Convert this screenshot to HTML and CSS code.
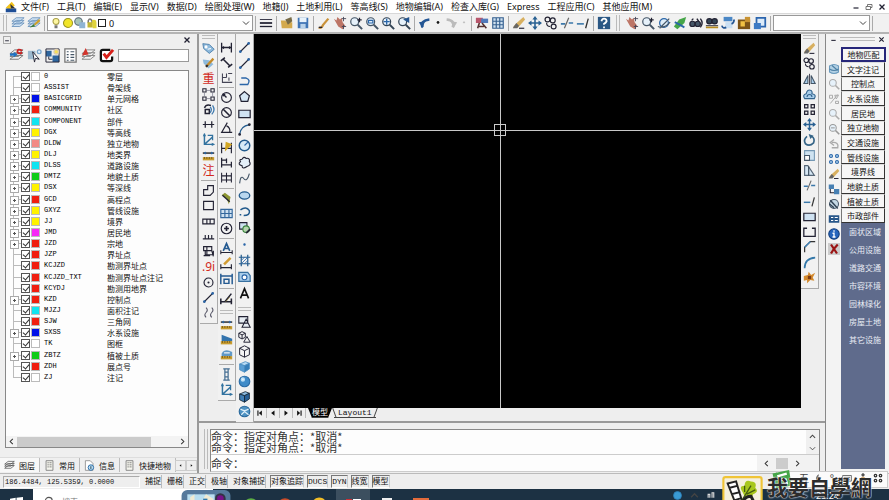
FILE: index.html
```html
<!DOCTYPE html>
<html lang="zh-CN">
<head>
<meta charset="utf-8">
<title>CAD</title>
<link rel="stylesheet" href="styles.css">
</head>
<body>
<nav class="menubar">
  <span class="logo" data-icon="app"></span>
  <a href="#">文件(F)</a><a href="#">工具(T)</a><a href="#">编辑(E)</a><a href="#">显示(V)</a><a href="#">数据(D)</a><a href="#">绘图处理(W)</a><a href="#">地籍(J)</a><a href="#">土地利用(L)</a><a href="#">等高线(S)</a><a href="#">地物编辑(A)</a><a href="#">检查入库(G)</a><a href="#">Express</a><a href="#">工程应用(C)</a><a href="#">其他应用(M)</a>
  <div class="winctl"><button aria-label="最小化" data-icon="min"></button><button aria-label="还原" data-icon="restore"></button><button aria-label="关闭" data-icon="close"></button></div>
</nav>

<header class="topbar">
  <i class="grip"></i>
  <div class="tools" data-icons="layers layersedit"></div>
  <i class="rule"></i>
  <div class="combo layercombo">
    <span data-icon="bulb"></span><span data-icon="sun"></span><span data-icon="freeze"></span><span data-icon="lock"></span><span class="box"></span>
    <select aria-label="图层"><option>0</option></select>
    <span class="chev" data-icon="chev"></span>
  </div>
  <i class="rule"></i>
  <div class="tools" data-icons="ltype | open save | pen pan zoomrt zoomwin zoomall zoomprev | undo dot redo dotg | match table | erase move copy trim extend | help"></div>
  <i class="grip"></i>
  <div class="tools" data-icons="pan zoomrt orbit greenarrow binoc bincar sheet case win"></div>
  <i class="rule"></i>
  <div class="combo stylecombo"><select aria-label="样式"><option></option></select><span class="chev" data-icon="chev"></span></div>
  <i class="rule"></i>
</header>

<main class="workspace">
  <aside class="palette">
    <div class="palhead"><button class="mini" aria-label="折叠" data-icon="min"></button><button class="mini plain" aria-label="关闭" data-icon="close"></button></div>
    <div class="paltools">
      <div class="tools" data-icons="layc pick tree list layred check"></div>
      <input type="text" aria-label="过滤">
    </div>
    <div class="treebox">
      <ul class="tree" id="tree"></ul>
      <div class="hscroll"><button aria-label="左" data-icon="left"></button><div class="track"><div class="thumb"></div></div><button aria-label="右" data-icon="right"></button></div>
    </div>
    <div class="paltabs">
      <button class="on"><span data-icon="stack"></span>图层</button><button><span data-icon="page"></span>常用</button><button><span data-icon="info"></span>信息</button><button><span data-icon="page"></span>快捷地物</button>
      <div class="tabnav"><button aria-label="上一个" data-icon="tl"></button><button aria-label="下一个" data-icon="tr"></button></div>
    </div>
  </aside>

  <section class="center">
    <div class="stage">
      <div class="vcol c1"><i class="vgrip"></i><div class="tools" data-icons="tag tagpen !重 nodes swirl break axis ruler !注 | poly rect2 rect3 comb build !.9i circ line waves"></div></div>
      <div class="vcol c2">
        <div class="tools" data-icons="dimh dimd dimo | diar diac ang | dimq dimb dimc | dimy tol cent | dima dimp dimu | dims"></div>
        <i class="vgrip"></i>
        <div class="tools" data-icons="ruler slope slope2 | ibar axis"></div>
      </div>
      <div class="vcol c3">
        <div class="tools" data-icons="line line arcl penta rect arc circle cloud spline ellipse earc block point hatch region text"></div>
        <i class="vgrip"></i>
        <div class="tools" data-icons="tria cubes wire cube sphere cubek globe"></div>
      </div>
      <div class="view">
        <div class="canvas"><i class="hx"></i><i class="vx"></i><i class="aim"></i></div>
        <div class="sheets">
          <button aria-label="首个" data-icon="first"></button><button aria-label="上一个" data-icon="tl"></button><button aria-label="下一个" data-icon="tr"></button><button aria-label="末个" data-icon="last"></button>
          <button class="sheet on">模型</button><button class="sheet">Layout1</button>
        </div>
      </div>
      <div class="vcol mod"><i class="vgrip"></i><div class="tools" data-icons="erase copy mirror offset array move rotate scale stretch trim extend rect rectb chamfer fillet explode"></div></div>
    </div>
    <div class="cmd">
      <i class="grip"></i>
      <div class="cmdbox">
        <div class="history"><div><p>命令：指定对角点：*取消*</p><p>命令：指定对角点：*取消*</p></div><div class="vs"><button aria-label="上" data-icon="up"></button><button aria-label="下" data-icon="chev"></button></div></div>
        <div class="prompt"><label for="cmd">命令：</label><input id="cmd" type="text"><div class="hs"><button aria-label="左" data-icon="left"></button><b></b><button aria-label="右" data-icon="right"></button></div></div>
      </div>
    </div>
  </section>

  <aside class="side">
    <div class="sidehead"><button aria-label="折叠" data-icon="min"></button><i></i><button aria-label="关闭" data-icon="close"></button></div>
    <div class="sidebody">
      <div class="tools" data-icons="db zoomg nodesg zoomg zoomg2 undog dots4 erase linkb nopen grid infob redx"></div>
      <div class="cats">
        <button class="on">地物匹配</button>
        <div class="group"><button>文字注记</button><button>控制点</button><button>水系设施</button><button>居民地</button><button>独立地物</button><button>交通设施</button><button>管线设施</button><button>境界线</button><button>地貌土质</button><button>植被土质</button><button>市政部件</button></div>
        <div class="sub"><a href="#">面状区域</a><a href="#">公用设施</a><a href="#">道路交通</a><a href="#">市容环境</a><a href="#">园林绿化</a><a href="#">房屋土地</a><a href="#">其它设施</a></div>
      </div>
    </div>
  </aside>
</main>

<footer class="status">
  <output>186.4484, 125.5359, 0.0000</output>
  <button>捕捉</button><button>栅格</button><button>正交</button><button>极轴</button><button>对象捕捉</button><button class="on">对象追踪</button><button class="on">DUCS</button><button class="on">DYN</button><button class="on">线宽</button><button class="on">模型</button>
</footer>

<div class="taskbar">
  <button class="start" aria-label="开始" data-icon="windows"></button>
  <label class="find"><span data-icon="mag"></span><input type="text" placeholder="搜索" aria-label="搜索"></label>
  <span class="widget" data-icon="widget"></span>
  <div class="apps"><button aria-label="浏览器" data-icon="appg"></button><button aria-label="录屏" data-icon="appr"></button><button aria-label="帮助" data-icon="appy"></button><button class="live" aria-label="CAD" data-icon="appc"></button><button aria-label="文档" data-icon="appd"></button><button aria-label="演示" data-icon="apps"></button></div>
  <div class="tray"><span data-icon="trayb"></span><span data-icon="up"></span><span data-icon="traya"></span><time>23:24</time></div>
</div>

<div class="ime"><span>五</span><span data-icon="moon"></span><span>°,</span><span data-icon="kbd"></span><span data-icon="person"></span><span data-icon="four"></span></div>
<span class="simes" data-icon="sime"></span>
<div class="brand"><span class="brandlogo" data-icon="brand"></span><strong>我要自學網</strong></div>
<script src="app.js"></script>
</body>
</html>
```
FILE: styles.css
```css
* { box-sizing: border-box; }
html, body { height: 100%; }
body {
  margin: 0; display: flex; flex-direction: column; overflow: hidden; position: relative;
  background: #eeeeee; color: #111;
  font: 8px/11px "Noto Sans", "Noto Sans CJK SC", sans-serif;
}
button, input, select { font: inherit; color: inherit; margin: 0; padding: 0; border: 0; background: none; outline: 0; min-width: 0; }
a { color: inherit; text-decoration: none; }
ul, p { margin: 0; padding: 0; list-style: none; }
svg { display: block; width: 100%; height: 100%; overflow: visible; }
i { display: block; flex: none; }
select { appearance: none; }

.menubar { flex: none; height: 13px; display: flex; align-items: center; gap: 8px; padding-left: 5px; background: #fff; font-size: 9px; white-space: nowrap; }
.logo { width: 12px; height: 12px; margin-right: -4px; }
.winctl { margin-left: auto; display: flex; gap: 5px; padding-right: 3px; }
.winctl button { width: 8px; height: 8px; }

.topbar { flex: none; height: 21px; display: flex; align-items: center; background: #f1f1f1; border-top: 1px solid #d8d8d8; border-bottom: 2px solid #b4b4b4; }
.topbar .tools { display: flex; align-items: center; flex: none; }
.topbar .tools button { width: 16px; height: 14px; padding: 0 1px; }
.topbar .tools button.slim { width: 10px; padding: 0; }
.rule { width: 1px; height: 15px; background: #aaa; margin: 0 2px; }
.grip { width: 4px; height: 16px; border: solid #bbb; border-width: 0 1px; margin: 0 3px; }
.topbar .tools + .grip { margin: 0 4px; }
.combo { display: flex; flex: none; align-items: center; height: 16px; border: 1px solid #999; background: #fff; }
.combo select { flex: 1; height: 14px; padding-left: 3px; }
.layercombo { width: 206px; padding-left: 2px; font-size: 9px; }
.layercombo > span { width: 12px; height: 12px; }
.layercombo .box { width: 8px; height: 8px; border: 1px solid #222; }
.combo .chev { width: 8px; height: 8px; margin-right: 2px; }
.stylecombo { width: 97px; }

.workspace { flex: 1; min-height: 0; display: flex; }
.palette { width: 199px; flex: none; display: flex; flex-direction: column; border-right: 2px solid #999; background: #efefef; }
.palhead { display: flex; justify-content: space-between; height: 12px; padding: 2px 6px 0 3px; }
.mini { width: 8px; height: 8px; border: 1px solid #aaa; }
.mini.plain { border: 0; }
.paltools { display: flex; align-items: center; height: 18px; padding: 0 8px 0 9px; }
.paltools .tools { display: flex; gap: 3px; margin-right: 4px; }
.paltools .tools button { width: 15px; height: 15px; }
.paltools input { flex: 1; height: 13px; border: 1px solid #999; background: #fff; }
.treebox { flex: 1; margin: 6px 8px 9px 5px; border: 1px solid #888; background: #fdfdfd; display: flex; flex-direction: column; justify-content: space-between; }
.tree { height: 312px; display: grid; grid-auto-rows: 1fr; position: relative; }
.tree li { display: grid; grid-template-columns: 15px 10px 13px 63px 1fr; align-items: center; position: relative; }
.tree li::before { content: ""; position: absolute; left: 7px; top: 0; bottom: 0; border-left: 1px solid #bbb; }
.tree li:first-child::before { top: 5px; }
.tree li:last-child::before { bottom: 5px; }
.twig { position: relative; height: 7px; }
.twig::before { content: ""; position: absolute; left: 7px; top: 3px; width: 8px; height: 1px; background: #bbb; }
.twig.plus::after { content: ""; position: absolute; left: 4px; top: 0; width: 7px; height: 7px; border: 1px solid #aaa; background: linear-gradient(#555, #555) center/3px 1px no-repeat, linear-gradient(#555, #555) center/1px 3px no-repeat, #fff; }
.tree input { appearance: none; width: 9px; height: 9px; border: 1px solid #555; background: #fff; position: relative; }
.tree input:checked::after { content: ""; position: absolute; left: 2px; top: 0; width: 3px; height: 5px; border: solid #333; border-width: 0 1px 1px 0; transform: rotate(40deg); }
.sw { width: 9px; height: 9px; border: 1px solid #bbb; }
.tree code { font: 7px/11px "Liberation Mono", monospace; color: #000; }
.hscroll { display: flex; align-items: center; height: 11px; background: #f3f3f3; }
.hscroll button { width: 11px; height: 7px; }
.track { flex: 1; height: 10px; }
.thumb { width: 84%; height: 10px; background: #cbcbcb; }
.paltabs { display: flex; height: 16px; border-top: 1px solid #ddd; font-size: 8px; position: relative; overflow: hidden; white-space: nowrap; }
.paltabs > button { display: flex; align-items: center; gap: 4px; padding: 0 4px; height: 14px; border-right: 1px solid #bbb; }
.paltabs > button.on { background: #f8f8f8; }
.paltabs > button > span { width: 11px; height: 11px; }
.tabnav { position: absolute; right: 0; top: 2px; display: flex; background: #eee; }
.tabnav button { width: 11px; height: 11px; padding: 3px; border: 1px solid #ccc; }

.center { flex: 1; min-width: 0; display: flex; flex-direction: column; }
.stage { flex: 1; min-height: 0; display: flex; align-items: flex-start; padding-left: 1px; border-bottom: 2px solid #999; }
.vcol { width: 18px; flex: none; border-right: 1px solid #aaa; border-bottom: 1px solid #aaa; padding: 0 1px 3px; background: #f1f1f1; }
.vcol .tools { display: flex; flex-direction: column; align-items: center; }
.vcol .tools button { width: 15px; height: 15px; padding: 1px; }
.vcol .tools .sep { width: 15px; height: 1px; margin: 2px 0; background: #aaa; }
.vcol .glyph { font-size: 12px; line-height: 13px; padding: 0; color: #d22a1c; white-space: nowrap; }
.vgrip { height: 4px; margin: 1px 1px 2px; border: solid #bbb; border-width: 1px 0; }
.c2, .c3 { padding-top: 6px; }
.c3 .tools + .vgrip, .c2 .tools + .vgrip { margin: 4px 1px 3px; }
.c3 .tools:first-child { height: 263px; justify-content: space-between; padding-bottom: 2px; }
.c1 .tools { height: 279px; justify-content: space-between; }
.c2 .tools:first-child { height: 266px; justify-content: space-between; }
.mod .tools { height: 244px; justify-content: space-between; }
.view { flex: 1; min-width: 0; align-self: stretch; display: flex; flex-direction: column; }
.canvas { flex: 1; position: relative; background: #000; }
.hx, .vx, .aim { position: absolute; background: #c8c8c8; }
.hx { left: 0; right: 0; top: 96px; height: 1px; }
.vx { top: 0; bottom: 0; left: 45%; height: auto; width: 1px; }
.aim { left: 45%; top: 90px; width: 12px; height: 12px; margin-left: -6px; border: 1px solid #ccc; background: none; }
.sheets { height: 12px; display: flex; align-items: flex-start; margin-bottom: 1px; }
.sheets button:not(.sheet) { width: 13px; height: 10px; padding: 2px 3px; border-right: 1px solid #bbb; }
.sheet { position: relative; height: 10px; padding: 0 4px; line-height: 9px; font-size: 8px; font-family: "Liberation Mono", "Noto Sans CJK SC", monospace; border-bottom: 1px solid #444; }
.sheet::before, .sheet::after { content: ""; position: absolute; top: 0; width: 1px; height: 10px; background: #444; }
.sheet::before { left: 0; transform: skewX(20deg); }
.sheet::after { right: 0; transform: skewX(-20deg); }
.sheet.on { background: #000; color: #fff; margin: 0 2px; clip-path: polygon(0 0, 100% 0, calc(100% - 4px) 100%, 4px 100%); }
.mod { margin-right: 6px; }
.cmd { flex: none; height: 50px; display: flex; padding: 6px 5px 1px 5px; }
.cmd .grip { height: 40px; margin: 0 2px 0 0; }
.cmdbox { flex: 1; display: flex; flex-direction: column; border: 1px solid #888; border-bottom-color: #ccc; background: #fdfdfd; font-size: 11px; line-height: 11px; font-family: "Noto Sans CJK SC", sans-serif; color: #333; }
.history { height: 28px; display: flex; justify-content: space-between; border-bottom: 1px solid #ccc; }
.history > div:first-child { padding-top: 1px; }
.history p { white-space: nowrap; }
.vs { display: flex; flex-direction: column; justify-content: space-around; width: 13px; background: #f0f0f0; }
.vs button { width: 7px; height: 7px; margin: auto; }
.prompt { flex: 1; display: flex; align-items: center; }
.prompt input { flex: 1; }
.hs { display: flex; align-items: center; width: 62px; padding: 0 12px 0 0; background: #f2f2f2; align-self: stretch; }
.hs button { width: 7px; height: 7px; margin: 0 auto; }
.hs b { width: 12px; height: 11px; background: #ccc; }

.side { width: 64px; flex: none; display: flex; flex-direction: column; border-left: 1px solid #888; background: #f3f3f3; }
.sidehead { display: flex; align-items: center; gap: 3px; height: 10px; padding: 0 4px 0 4px; }
.sidehead button { width: 7px; height: 7px; }
.sidehead i { flex: 1; height: 4px; border: solid #bbb; border-width: 1px 0; }
.sidebody { flex: 1; display: flex; padding: 3px 4px 4px 0; min-height: 0; }
.sidebody .tools { width: 15px; display: flex; flex-direction: column; gap: 1px; padding-top: 15px; align-items: center; }
.sidebody .tools button { width: 14px; height: 14px; padding: 1px; }
.cats { flex: 1; display: flex; flex-direction: column; background: #5f6b8c; white-space: nowrap; }
.cats button { background: #f6f6f6; border: 1px solid #555; border-color: #ddd #333 #333 #777; }
.cats button.on { flex: none; height: 15px; line-height: 10px; border: 2px solid #27277a; margin-right: -1px; }
.group { display: grid; grid-auto-rows: 1fr; height: 161px; }
.group button { line-height: 11px; }
.sub { display: flex; flex-direction: column; align-items: flex-end; padding: 0 4px 0 0; color: #e8ebf4; line-height: 18px; }

.status { flex: none; height: 16px; display: flex; align-items: center; gap: 4px; padding-left: 3px; border-top: 1px solid #bbb; background: #eee; white-space: nowrap; font-family: "Liberation Mono", "Noto Sans CJK SC", monospace; }
.status output { width: 137px; height: 12px; padding-left: 1px; font-size: 7px; line-height: 11px; border: 1px solid #bbb; border-color: #aaa #fff #fff #aaa; }
.status button { height: 13px; padding: 0 0 0 1px; border-right: 1px solid #bbb; }
.status button.on { border: 1px solid #777; border-right-color: #ccc; border-bottom-color: #fff; padding: 0; margin-right: -1px; }

.taskbar { flex: none; height: 11px; display: flex; align-items: flex-start; background: #1c3143; overflow: hidden; color: #fff; }
.start { width: 33px; height: 22px; padding: 7px 10px 0 10px; flex: none; }
.find { display: flex; flex: none; width: 154px; height: 28px; background: #fff; color: #777; padding: 7px 0 0 11px; }
.find span { width: 11px; height: 11px; }
.find input { width: 100px; height: 11px; margin-left: 7px; }
.widget { width: 47px; height: 24px; padding-right: 9px; background: linear-gradient(90deg, #fff 26px, #1c3143 26px); flex: none; padding-top: 1px; }
.apps { display: flex; }
.apps button { width: 34px; height: 28px; padding: 6px 9px 0; flex: none; }
.apps .live { background: #3c4f5f; }
.tray { margin-left: auto; display: flex; width: 216px; gap: 8px; padding-right: 50px; align-items: flex-start; }
.tray span { width: 9px; height: 11px; padding-top: 2px; }
.tray time { margin-left: auto; font-size: 9px; line-height: 13px; }

.ime { position: absolute; right: 1px; bottom: 12px; width: 112px; height: 17px; background: #fbfbfb; border: 1px solid #ccc; display: flex; align-items: flex-start; justify-content: space-between; padding: 1px 4px 0 22px; font-size: 10px; color: #444; }
.ime span[data-icon] { width: 10px; height: 10px; }
.simes { position: absolute; right: 97px; bottom: 11px; width: 20px; height: 19px; }
.brand { position: absolute; right: 17px; bottom: 0; display: flex; align-items: flex-start; gap: 4px; height: 25px; overflow: hidden; color: #2c2c2c; }
.brandlogo { width: 41px; height: 34px; }
.brand strong { font: bold 21px/23px "Noto Sans CJK TC", sans-serif; text-shadow: 0 0 2px #fff, 0 0 1px #fff; }
```
FILE: app.js
```js
const K = '#223', B = '#2b66a8', L = '#a9cdea';
const s = (d, c = K, w = 1.4, f = 'none') => `<path d="${d}" stroke="${c}" stroke-width="${w}" fill="${f}"/>`;
const f = (d, c) => `<path d="${d}" fill="${c}"/>`;
const c = (x, y, r, st = K, fill = 'none', w = 1.4) => `<circle cx="${x}" cy="${y}" r="${r}" stroke="${st}" stroke-width="${w}" fill="${fill}"/>`;
const lens = (col, extra = '') => c(6.5, 6.5, 4.5, col, '#e6f1fa') + s('M10 10L15 15', col, 2.2) + extra;
const stack = (a, b) => s('M1 12L6 8H15L10 12ZM1 9L6 5H15L10 9ZM1 6L6 2H15L10 6Z', a, 1, b);
const ruler = f('M1 10H15V14H1Z', '#c79b2e') + s('M3 10V12M6 10V12M9 10V12M12 10V12', '#5b430a', 1);
const cube = (a, b, d, k) => `<g stroke="${k}" stroke-width="1">` + f('M2 5L9 2L14 4L8 7Z', a) + f('M2 5L8 7V15L2 12Z', b) + f('M8 7L14 4V11L8 15Z', d) + '</g>';
const ICONS = {
  app: f('M1 9L9 1L13 6L6 12Z', '#f2c21b') + f('M1 10H15V15H1Z', '#1f4e96') + f('M7 4L14 10H8Z', '#333'),
  min: s('M3 10H13', K, 2.4), restore: s('M5 6V3H14V9H11M2 7H11V13H2Z', '#555', 1.6), close: s('M3 3L13 13M13 3L3 13', K, 2.6),
  chev: s('M2 5L8 11L14 5', '#444', 2), up: s('M2 11L8 5L14 11', '#444', 2.4), left: s('M11 2L5 8L11 14', '#333', 2.4), right: s('M5 2L11 8L5 14', '#333', 2.4),
  tl: f('M12 1V15L3 8Z', '#111'), tr: f('M4 1V15L13 8Z', '#111'), first: f('M13 1V15L5 8ZM1 1H4V15H1Z', '#111'), last: f('M3 1V15L11 8ZM12 1H15V15H12Z', '#111'),
  layers: stack('#6d93bd', '#cfe2f3'), layersedit: stack('#6d93bd', '#cfe2f3') + f('M8 9L14 3L15 6L9 11Z', '#d0a12b') + f('M3 13L8 9L9 12Z', '#3b7a34'),
  bulb: c(8, 6, 4, '#aaa04a', '#fdf6a0') + f('M6 11H10V15H6Z', '#777'), sun: c(8, 8, 6, '#9b9420', '#f1e52a'),
  freeze: c(6, 6, 5, '#567', '#a7c4b8') + f('M7 7H15V15H7Z', '#8fb4d4'), lock: s('M3 8V5Q5 0 8 5V8', '#777', 2) + f('M2 7H9V14H2Z', '#c2b632') + f('M8 4Q14 2 14 8V15H9Z', '#e0d43c'),
  ltype: s('M1 4H15', K, 1) + s('M1 8H15', K, 2) + s('M1 12H15', K, 1.5), open: f('M1 5H6L8 7H14V14H2Z', '#d3a94d') + f('M6 4L13 1L14 6L9 10Z', '#776a45'),
  save: f('M2 2H14V14H2Z', '#3f74b5') + f('M4 2H12V7H4Z', '#e8f2fb') + f('M5 9H11V14H5Z', '#b9d2ea'),
  pen: s('M2 13Q5 15 7 10L13 3', '#c9923a', 2.6) + s('M2 13L6 13', K, 1.5),
  pan: f('M1 3L4 5L5 1L8 4L10 2L11 7L14 11L11 15L6 12Z', '#bd7566') + s('M12 1V6M10 3H15M12 10V15M10 12H15', '#445', 1),
  zoomrt: lens('#456', s('M12 2V7M9.5 4.5H14.5', K, 1.4)), zoomwin: lens('#456', s('M4 5H9V8H4Z', B, 1.4)), zoomall: lens('#345', s('M3 6.5H10M6.5 3V10', B, 1.5)), zoomprev: lens('#345', f('M14 1V8L7 4Z', '#24558f')),
  zoomg: lens('#aaa'), zoomg2: lens('#999', s('M4 6.5H9', '#999')),
  undo: s('M5 13Q3 5 13 4', '#245694', 3) + f('M1 7L8 6L5 14Z', '#245694'), redo: s('M10 13Q13 5 3 4', '#bbb', 3) + f('M15 7L8 6L11 14Z', '#bbb'), undog: s('M5 13H13Q15 5 5 6', '#aaa', 1.8) + s('M8 2L3 6L8 10', '#aaa', 1.8),
  dot: c(8, 7, 1.6, '#111', '#111'), dotg: c(8, 7, 1, '#bbb', '#bbb'),
  match: f('M1 2H9V8H1Z', '#b8566c') + f('M7 3H15V8H7Z', '#4f79bb') + s('M5 8L3 14M8 8L13 14M4 12H10', '#533', 1.8), table: s('M2 2H14V14H2ZM6 2V14M10 2V14M2 6H14M2 10H14', '#345f8f', 1.3, '#cfe0ef'),
  erase: f('M1 13L4 9L13 1L15 4L7 13Z', '#d8b060') + f('M2 12L5 8L8 11L6 14H1Z', '#666') + s('M8 14H14', K, 1.3),
  move: s('M8 2V14M2 8H14', '#286092', 1.8) + f('M8 0L11 4H5ZM8 16L5 12H11ZM0 8L4 5V11ZM16 8L12 11V5Z', '#286092'),
  copy: c(4, 4, 2.8) + c(10, 5, 2.8) + c(11, 12, 2.8) + s('M3 8Q3 12 7 12', K, 1.3), trim: s('M1 9H6M10 8H15', '#3b78aa', 1.8) + s('M10 2L5 14', '#666', 1.4), extend: s('M1 9H9', '#3b78aa', 1.8) + s('M14 3L11 14', '#333', 1.5),
  help: f('M1 1H15V15H1Z', '#2a5784') + s('M5 6Q6 3 8 3Q11 3 11 6Q10 8 8 9V10M8 12V14', '#fff', 2),
  orbit: c(8, 8, 5, B, '#e0eef9') + s('M3 14L14 3M1 12Q8 15 15 7', '#456'), greenarrow: f('M1 12L7 4L15 1L13 8L5 15Z', '#45a548') + s('M2 7Q8 10 13 13', B, 2),
  binoc: c(4, 9, 3, K, '#456') + c(10, 9, 3, K, '#456') + s('M3 5L5 3M9 3L11 6M13 3Q17 8 13 13', K, 1.6), bincar: c(5, 6, 3, K, '#345') + c(11, 6, 3, K, '#345') + s('M1 13H15', '#b78b1e', 2) + s('M1 11H15', K, 1),
  sheet: f('M3 1H13V6H3Z', '#4a87c6') + f('M5 7H13V14H5Z', '#c9dff3') + s('M1 11Q2 15 6 13M15 4Q15 8 12 9', '#245694', 2), case: f('M1 4H15V15H1Z', '#7c5317') + f('M4 6H9V12H4Z', '#f1c044') + f('M9 1H15V7H9Z', '#c89231'),
  win: s('M4 2H14V12H4Z', '#2b65ae', 2, '#dcebf9') + f('M1 8H9V15H1Z', '#3c7ac4'),
  layc: stack('#777', '#eee') + s('M1 7H6', '#1e72c4', 2.4) + f('M5 4L9 7L5 10Z', '#1e72c4') + s('M14 3Q9 0 9 4Q10 7 14 5', '#c22', 2), pick: f('M1 3H9V12H1Z', '#9db9ce') + s('M6 4L13 12L9 11L8 15Z', K, 1, '#fff') + c(13, 4, 2, '#7ba7cc', '#dff0ff'),
  tree: f('M1 3H7V9H1ZM8 8H15V15H8Z', '#2e669f') + s('M1 1H15V15H1ZM4 9V12H8', K, 1) + c(12, 4, 2.4, '#dca', '#f5df55'), list: s('M2 1H14V15H2Z', '#777', 1.4, '#fff') + s('M4 4H6M8 4H12M4 7H6M8 7H12M4 10H6M8 10H12M4 13H6M8 13H12', '#456', 1.2),
  layred: stack('#888', '#f4f4f4') + f('M1 8L5 0L8 7Z', '#d2342c'), check: s('M12 2H4Q2 2 2 4V12Q2 14 4 14H12Q14 14 14 12V9', '#111', 2.4, '#fff') + s('M5 6L8 10L15 2', '#d8201a', 3.2),
  stack: stack('#444', '#fff'), page: s('M3 1H13V15H3Z', '#777', 1.2, '#f5f5ee') + s('M5 4H7M8 4H11M5 7H7M8 7H11M5 10H7M8 10H11', '#555', 1), info: s('M2 1H9L13 5V15H2Z', '#888', 1.2, '#fff') + c(10, 11, 4, '#2b6ca8', '#bfe0f4') + s('M10 9V13', '#245', 1.4),
  tag: f('M1 2L9 3L15 9L9 14L2 8Z', '#8db9dc') + s('M1 2L9 3L15 9L9 14L2 8Z', '#4378a5', 1) + c(5, 6, 1.2, '#fff', '#fff') + s('M7 9L11 8', '#fff'), tagpen: f('M1 3L9 4L14 9L8 14L2 8Z', '#8db9dc') + s('M5 12L14 2', '#c58b29', 2.8) + s('M5 12L7 10', K, 2.6),
  nodes: s('M6 3H10M3 6V10M13 6V10M6 13H10', '#889', 1) + s('M1 1H5V5H1ZM11 1H15V5H11ZM1 11H5V15H1ZM11 11H15V15H11Z', K, 1.3), nodesg: s('M2 3H6V7H2ZM9 3H14L11 8ZM3 14L13 2M10 11H14V14H10Z', '#aaa', 1.3),
  swirl: s('M3 6Q5 1 11 3M4 8H9V13H4Z', K, 1.8) + s('M13 3Q17 9 12 14M10 5Q13 8 10 12', '#3f79ad', 1.6), break: s('M1 8H15M4 4V12M12 4V12', K, 1.5),
  axis: s('M3 1V14H15M3 14L13 5', '#31729f', 1.8) + s('M7 3H13V9', '#31729f', 1.6) + f('M1 4L3 0L5 4ZM12 12L16 14L12 16Z', '#31729f'), ruler: ruler + s('M1 5H15', '#111', 1.6, 'none') + c(4, 5, 1, B, B, 1) + c(12, 5, 1, B, B, 1),
  poly: s('M2 14V7H7V2H14V10L10 14Z'), rect2: s('M2 3H14V13H2Z'), rect3: s('M1 5H15V11H1ZM6 5V11M10 5V11'), comb: s('M1 11H15M4 11V6M8 11V6M12 11V6'), build: s('M2 2H12V7H2ZM4 7V12H14V7M2 13H10M6 2V12M12 7L14 14'), circ: c(8, 8, 5.5) + c(8, 8, .6), line: s('M2 14L14 2', K, 1.7) + c(3, 13, 1, B, B) + c(13, 3, 1, B, B), waves: s('M5 2Q8 5 5 8T5 14M12 2Q15 5 12 8T12 14', '#556', 1.3),
  dimh: s('M2 2V14M14 2V14M2 8H14', K, 1.6) + f('M2 8L5 6V10ZM14 8L11 6V10Z', K), dimd: s('M1 6L6 2M10 14L15 10M4 4L12 12', K, 1.9), dimo: s('M3 3V14H15M3 8H8M8 3V8M11 8V12M10 3H15', '#445', 1.3),
  diar: c(8, 8, 6) + s('M8 8L4 4', K, 1.7) + f('M3 3L7 4L4 7Z', K), diac: c(8, 8, 6) + s('M4 4L12 12', K, 2), ang: s('M15 14H2L9 2M8 6Q13 8 12 14'), 
  dimq: s('M2 2V15M14 2V15M2 9H14') + f('M7 1L15 4L6 13Z', '#d1a624'), dimb: s('M2 2V14M8 3V9M14 7V14M2 5H8M2 11H14', K, 1.5), dimc: s('M2 2V14M8 2V14M14 2V14M2 6H14M2 11H14', K, 1.3), dimy: f('M6 1L13 6L11 15L8 8L2 4Z', '#8d9632') + s('M3 4L12 12', K, 1.7), tol: s('M1 3H15V13H1ZM6 3V13M11 3V13M1 8H15', '#33679c', 1.4, '#cfe1f0'), cent: c(8, 8, 6.5) + s('M8 5V11M5 8H11', K, 2),
  dima: s('M4 11L8 2L12 11M5 8H11', '#245a91', 2) + s('M1 10V15M15 10V15M1 13H15', K, 1.3), dimp: s('M5 9L13 1', '#d19b31', 3) + s('M1 9V15M14 9V15M1 13H14', K, 1.4), dimu: s('M1 2V15M15 2V15M1 5H15M5 9H11V14H5Z', '#245a91', 1.8), dims: s('M1 8V15M14 8V15M1 12H15M6 12L14 2', K, 1.9) + s('M7 12L12 6', '#8b7c3b', 1),
  slope: f('M2 2L15 7V10H2Z', '#3474ad') + ruler, slope2: f('M2 7Q6 0 15 5V10H2Z', '#6199c6') + s('M5 6H12', '#fff') + ruler, ibar: s('M4 1H12M4 15H12M6 1V15M10 1V15M6 5H10M6 11H10', '#446d91', 1.5),
  arcl: s('M2 13H12Q16 7 10 5H4', B, 1.7), penta: s('M8 2L14 7L12 14H4L2 7Z', K, 1.5, '#d6e7f4'), rect: s('M1 4H15V13H1Z', K, 1.5, '#cfe2f2'), rectb: s('M5 4H1V14H15V4H11', K, 1.6), arc: s('M2 14Q3 4 14 2', '#235b8d', 1.7) + c(2, 14, 1) + c(14, 2, 1), circle: c(8, 8, 6.5, '#235b8d', '#d6e9f6', 1.8) + s('M8 8L12 4', B), cloud: s('M5 4Q7 0 10 3Q15 2 14 7Q17 11 11 13Q5 17 5 12Q-1 10 3 7Q1 4 5 4', K, 1.4, '#e4eff8'), spline: s('M2 14Q3 3 7 8T14 2', '#456'), ellipse: '<ellipse cx="8" cy="8" rx="6.5" ry="4.5" stroke="#235b8d" stroke-width="1.6" fill="#b9d7ee"/>', earc: s('M4 12H2M7 13Q15 13 14 7Q10 1 3 6', '#235b8d', 1.8), block: s('M2 2H11V10H2Z', K, 1.3, '#cfe1ef') + c(10, 10, 4, '#38843c', '#b6d6ae') + s('M10 15L15 10', K, 2), point: c(8, 8, .8, B, B), hatch: s('M4 1V15M12 1V15M1 4H15M1 12H15', '#235b8d', 1.5, L) + s('M4 12L12 4M4 8L8 4M8 12L12 8', B, 1), region: s('M1 3H12L15 7V14H1Z', '#37709f', 1.5, L) + c(8, 9, 3, B, '#fff'), text: s('M3 14L8 2L13 14M5 10H11', '#111', 2),
  tria: s('M1 2H12V10H1ZM5 15L10 5L15 15Z', K, 1.3, '#e8eef4'), cubes: s('M1 4L5 2L9 4V9L5 11L1 9ZM1 4L5 6L9 4M5 6V11M7 15L11 8L15 15Z', K, 1.2), wire: s('M2 4L8 1L14 4V12L8 15L2 12ZM2 4L8 7L14 4M8 7V15', K, 1.2, '#f6f6f6'), cube: cube('#b7daf4', '#5a9ed4', '#357db8', '#4a8cc0'), cubek: cube('#8ab8dd', '#407eb5', '#285f95', '#123'), sphere: c(8, 8, 6.5, '#2c6da6', '#3f8bc8') + c(6, 5.5, 2, '#b9ddf5', '#d8eefc'), globe: c(8, 8, 6.5, '#2b6a9d', '#4f92c2') + s('M3 5Q8 9 13 5M4 12L8 8L13 12', '#dff0fa', 1.5),
  mirror: s('M6 3V13H1ZM10 3V13H15Z', '#456', 1.3, L) + s('M8 1V15', K, 1), offset: s('M2 13Q-1 8 4 7Q5 1 10 3Q12 5 11 7Q17 8 14 13Z', '#34658e', 1.4, L) + s('M5 11Q5 8 8 8Q11 8 11 11', '#34658e'), array: s('M2 2H6V6H2ZM10 2H14V6H10ZM2 10H6V14H2ZM10 10H14V14H10Z', K, 1.5), rotate: s('M5 3Q0 7 3 12Q8 16 13 11Q15 6 11 3', '#346487', 2) + f('M7 0L13 2L9 6Z', '#346487'), scale: s('M2 2H14V14H2Z', '#7397b3', 1.3, '#cfe3f1') + s('M2 8H8V14H2Z', '#456', 1.3, '#fff'), stretch: s('M2 14V2H6L14 14Z', '#567', 1.4, '#d6e7f4') + s('M7 3V14', '#345'), chamfer: s('M2 15V9L9 2H15', '#333', 1.5) + s('M2 9L9 2', '#3b83bb', 1.7), fillet: s('M2 15Q2 3 15 2', '#3478a9', 2), explode: f('M1 6L6 5L7 1L10 5L15 2L12 8L14 12L9 11L5 15V11L1 12Z', '#d48a2d') + f('M6 6H10V10H6Z', '#7c3b14'),
  db: s('M2 4Q8 0 14 4V12Q8 16 2 12Z', '#6b9abd', 1.4, '#b2d0e4') + s('M2 8Q8 12 14 8M5 3L13 10', '#4e81a5', 1.5), dots4: c(4, 4, 2, B, L) + c(12, 4, 2, B, L) + c(4, 12, 2, B, L) + c(12, 12, 2, B, L), linkb: f('M1 2H8V8H1ZM8 8H15V15H8Z', '#4780b3') + s('M3 8V13H8', K), nopen: c(8, 8, 6, '#456', '#c5d9e5') + s('M3 3L13 14M2 8L8 13', '#345', 2), grid: f('M1 3H15V13H1Z', '#28578a') + s('M4 6H7M9 6H13M4 10H7M9 10H13', '#fff'), infob: c(8, 8, 7, '#123d7c', '#2565bd') + s('M8 3V5M6 7H8V12M6 12H10', '#fff', 1.8), redx: f('M0 0H16V16H0Z', '#ccc') + s('M4 2Q8 8 12 14M13 2Q7 8 4 14', '#9b1414', 3),
  windows: f('M0 2L7 1V8H0ZM8 1L16 0V8H8ZM0 9H7V15L0 14ZM8 9H16V16L8 15Z', '#fff'), mag: c(7, 7, 5, '#555', 'none', 1.6) + s('M3 11L0 15', '#555', 1.6),
  widget: '<rect x="-9" y="0" width="34" height="24" rx="4" fill="#55799c"/><rect x="-5" y="3" width="19" height="18" fill="#b9def0"/>' + f('M-3 5L0 3V8H5L8 3L13 6V14H-3Z', '#f0ead2') + c(18, 6, 3, '#334', '#718') + f('M6 6H9V12H6Z', '#2b78b0'),
  appg: c(8, 8, 7, '#5cad43', '#75c45a') + s('M4 8L8 4L12 8', '#fff', 2), appr: c(8, 8, 7, '#ca4b28', '#e2613b'), appy: s('M3 5Q4 1 8 1Q13 1 13 5Q12 8 8 10', '#f1bd27', 3), appc: f('M1 1H7V9H1Z', '#cf2f35') + s('M8 2H15V10', '#fff', 2), appd: f('M3 0H13V16H3Z', '#eee') + s('M5 4H10', '#b33'), apps: f('M0 0H16V16H0Z', '#e36b3b') + s('M13 4H5L4 8H12L11 12', '#fff', 2.4),
  trayb: c(8, 8, 7, '#2d82bb', '#3a9bd5'), traya: s('M2 12V6H5V12M9 12V3H12V12', '#ddd', 2),
  moon: f('M8 2Q4 13 15 11Q6 19 3 10Q3 4 8 2', '#666'), kbd: s('M1 4H15V13H1ZM3 7H13M3 10H13', '#555', 1.3), person: c(8, 3, 2, '#555', '#555') + f('M3 15Q3 6 8 6Q13 6 13 15Z', '#c98b37'), four: c(4, 4, 2, '#333', 'none', 2) + c(12, 4, 2, '#333', 'none', 2) + c(4, 12, 2, '#333', 'none', 2) + c(12, 12, 2, '#333', 'none', 2),
  sime: f('M0 3L14 0L16 13L3 16Z', '#45a548') + s('M12 3L5 5L6 8L11 8L12 11L6 13', '#fff', 2),
  brand: '<rect x="-1" y="1" width="18" height="18" rx="1" stroke="#f0c437" stroke-width="1" fill="#f5f0df"/>' + s('M1 4L5 3L8 13L5 14ZM2 6L6 5M3 9L7 8M4 12L7 11', '#222', .9, '#fff') + f('M8 8Q6 5 9 5Q9 2 12 3Q15 3 14 6Q16 8 13 9Q12 12 9 10Z', '#a8c71d') + s('M7 13Q9 10 12 5M10 9L14 7M9 8L9 5', '#445b10', .6) + s('M8 13Q9 10 12 10L14 14', '#222', 1.4)
};
const svg = n => `<svg viewBox="0 0 16 16" aria-hidden="true">${ICONS[n]}</svg>`;

document.querySelectorAll('[data-icon]').forEach(e => { e.innerHTML = svg(e.dataset.icon); });
document.querySelectorAll('[data-icons]').forEach(bar => {
  const flat = bar.closest('.topbar');
  bar.innerHTML = bar.dataset.icons.split(' ').map(n => {
    if (n === '|') return `<i class="${flat ? 'rule' : 'sep'}"></i>`;
    if (n[0] === '!') return `<button class="glyph">${n.slice(1)}</button>`;
    return `<button class="${n === 'dot' || n === 'dotg' ? 'slim' : ''}" aria-label="${n}">${svg(n)}</button>`;
  }).join('');
});

const R = '#f01f10', Y = '#fff200', C = '#10e4f0', W = '#fff', U = '#0010e8', G = '#10cc18';
const LAYERS = [
  ['0', '零层', W], ['ASSIST', '骨架线', W], ['BASICGRID', '单元网格', U, 1], ['COMMUNITY', '社区', R, 1], ['COMPONENT', '部件', C, 1],
  ['DGX', '等高线', Y, 1], ['DLDW', '独立地物', '#f28a84', 1], ['DLJ', '地类界', Y, 1], ['DLSS', '道路设施', C, 1], ['DMTZ', '地貌土质', G, 1],
  ['DSX', '等深线', Y, 1], ['GCD', '高程点', R, 1], ['GXYZ', '管线设施', Y, 1], ['JJ', '境界', Y, 1], ['JMD', '居民地', '#f628f6', 1], ['JZD', '宗地', R, 1],
  ['JZP', '界址点', R], ['KCJZD', '勘测界址点', R], ['KCJZD_TXT', '勘测界址点注记', R], ['KCYDJ', '勘测用地界', R], ['KZD', '控制点', R, 1],
  ['MJZJ', '面积注记', C], ['SJW', '三角网', R], ['SXSS', '水系设施', U, 1], ['TK', '图框', W], ['ZBTZ', '植被土质', G, 1], ['ZDH', '展点号', R], ['ZJ', '注记', W]
];
document.getElementById('tree').innerHTML = LAYERS.map(([id, label, col, plus]) =>
  `<li><span class="twig${plus ? ' plus' : ''}"></span><input type="checkbox" id="l${id}" checked><span class="sw" style="background:${col}"></span><code>${id}</code><label for="l${id}">${label}</label></li>`).join('');
```
